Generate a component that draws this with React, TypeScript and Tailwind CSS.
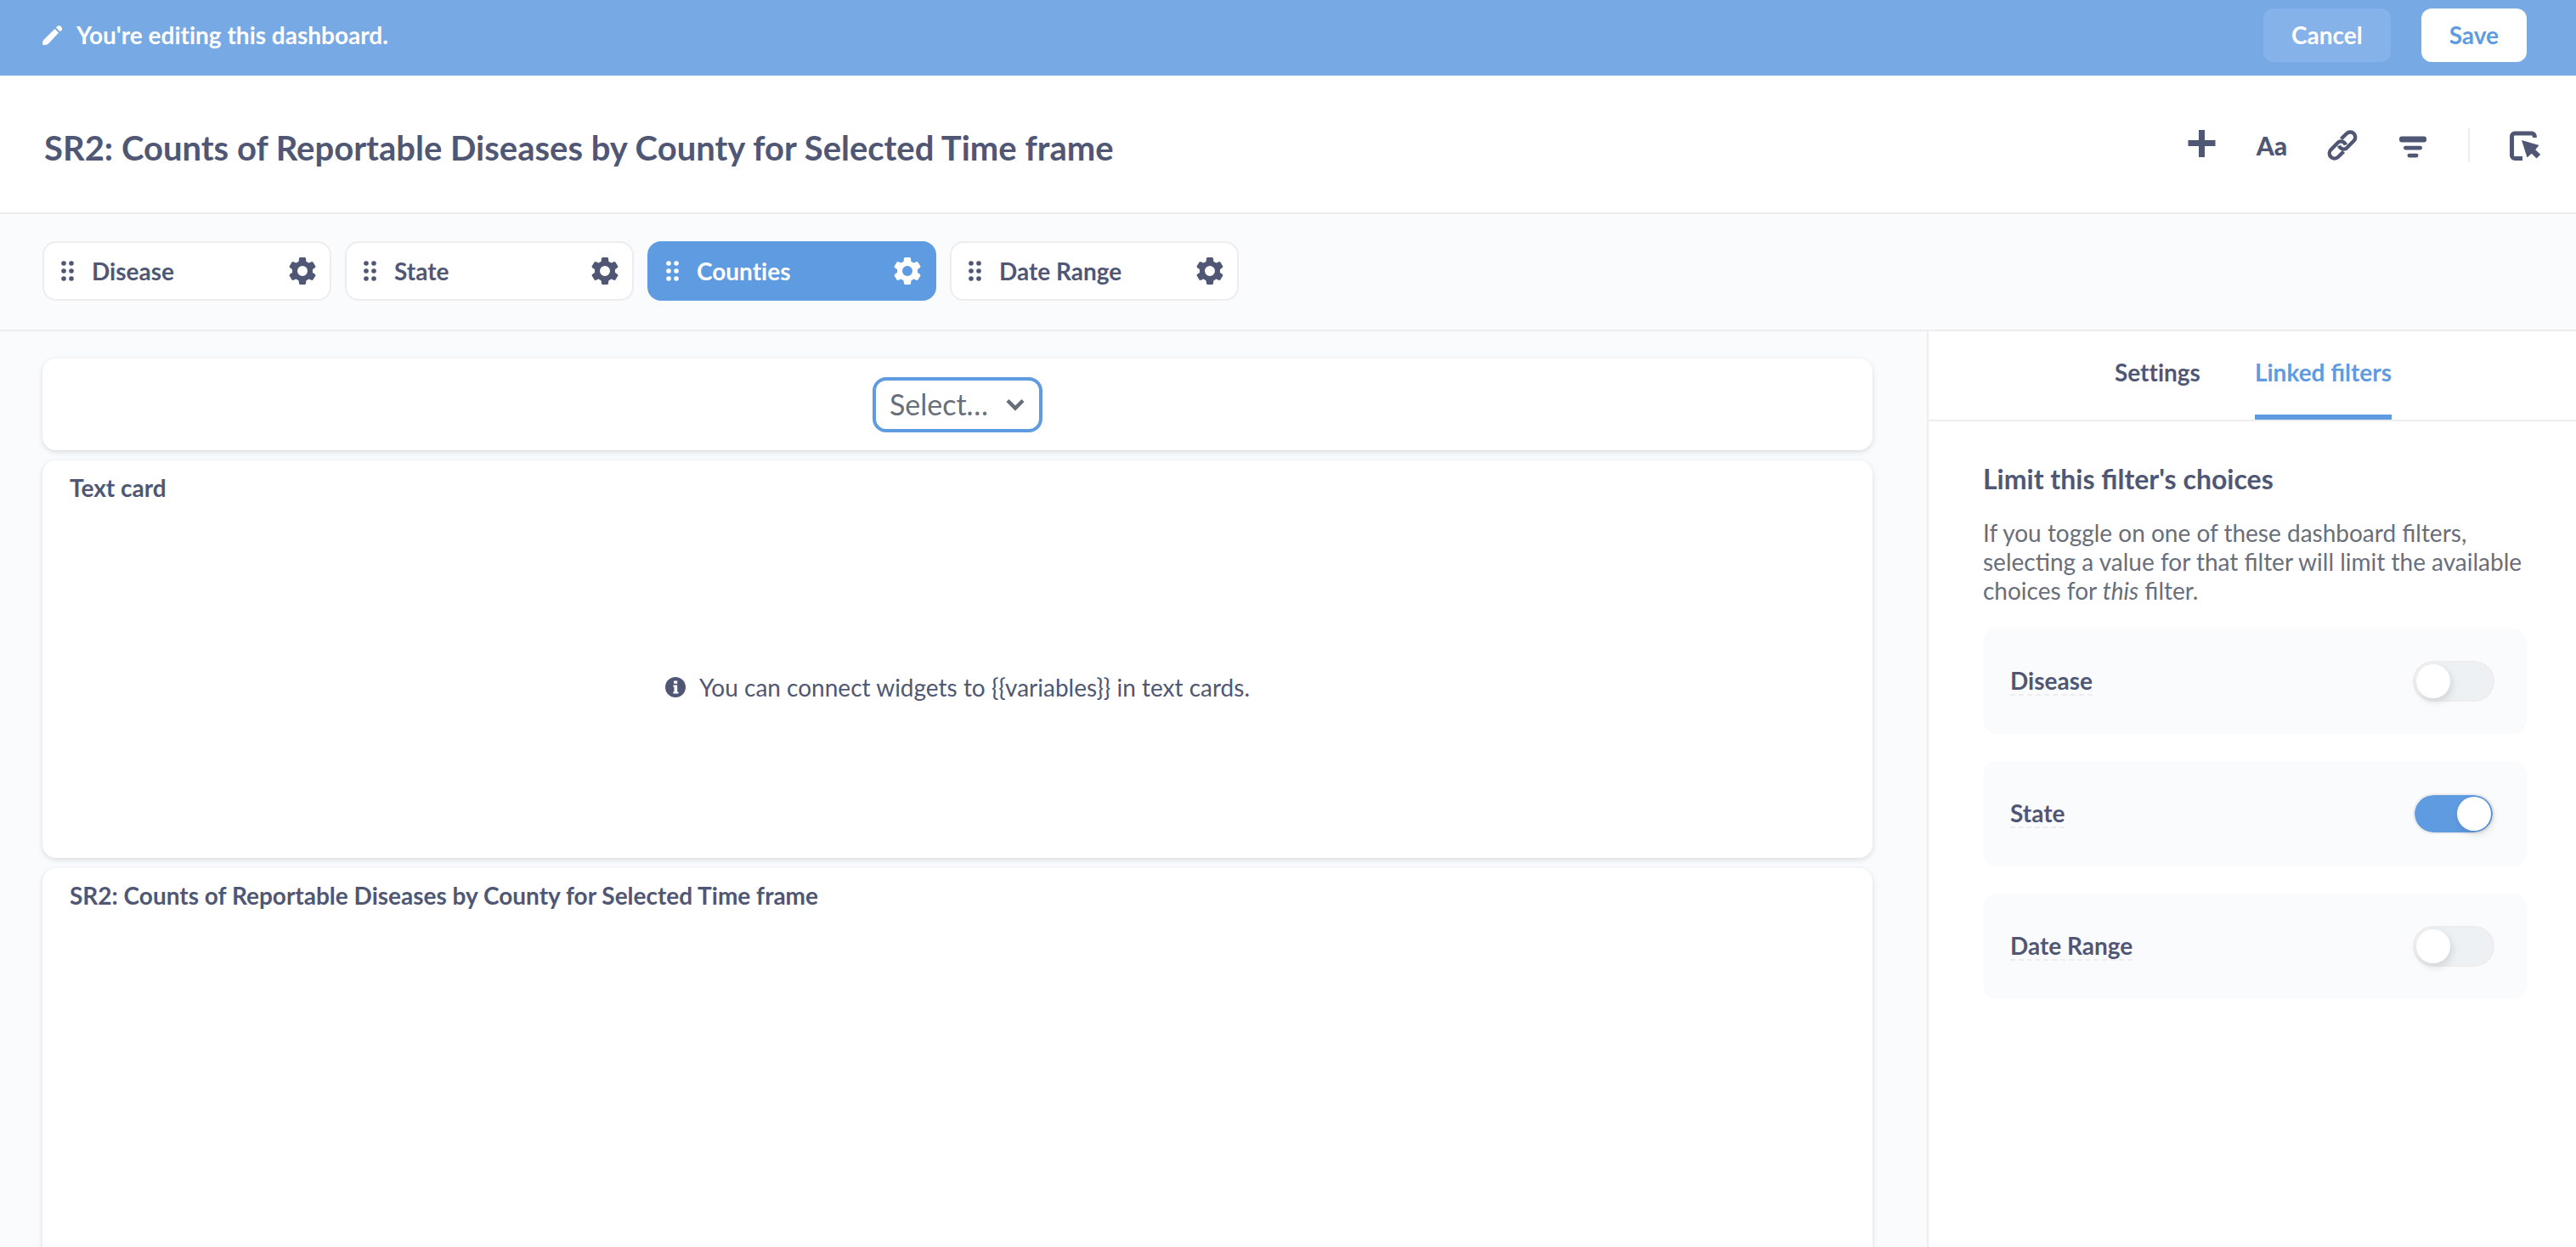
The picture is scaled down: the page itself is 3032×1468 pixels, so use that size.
import { useState, type ReactNode } from "react";

const filters = ["Disease", "State", "Counties", "Date Range"];
const linkable = ["Disease", "State", "Date Range"];

function PencilIcon() {
  return (
    <svg className="size-6" viewBox="0 0 24 24" fill="currentColor" aria-hidden="true">
      <path d="M14.500 5 19 9.500 7.200 22.200C6 23.400 4.500 24 2 24 .8 24 0 23.600 0 22.400c0-2 .6-3.800 1.800-5z" />
      <path d="M16 3.500 18 1.500a4 4 0 0 1 5 5L20.500 8z" />
    </svg>
  );
}

function GripIcon() {
  return (
    <svg className="h-6 w-4" viewBox="0 0 16 24" fill="currentColor" aria-hidden="true">
      {[3, 12].map((x) => [3, 12, 21].map((y) => <circle key={`${x}-${y}`} cx={x} cy={y} r="2.8" />))}
    </svg>
  );
}

function GearIcon() {
  return (
    <svg className="size-8" viewBox="0 0 32 32" fill="currentColor" aria-hidden="true">
      <circle cx="16" cy="16" r="9" fill="none" stroke="currentColor" strokeWidth="6" />
      {[0, 60, 120, 180, 240, 300].map((angle) => (
        <path key={angle} d="M13 0h6l1 1 .6 6h-9.200l.6-6z" transform={`rotate(${angle} 16 16)`} />
      ))}
    </svg>
  );
}

function PlusIcon() {
  return (
    <svg className="size-9" viewBox="0 0 36 36" fill="currentColor" aria-hidden="true">
      <path d="M15 0h7v12h12.500v7H22v13h-7V19H2.500v-7H15z" />
    </svg>
  );
}

function LinkIcon() {
  return (
    <svg className="size-9" viewBox="0 0 36 36" fill="none" stroke="currentColor" strokeWidth="4.4" aria-hidden="true">
      <path d="M16.500 10.500 23 4.300a5.900 5.900 0 0 1 8.500 8.500L22.500 21.800a5.900 5.900 0 0 1-8.500-3.300" />
      <path d="M19.500 25.500 13 31.700a5.900 5.900 0 0 1-8.500-8.500L13.500 14.200a5.900 5.900 0 0 1 8.500 3.300" />
    </svg>
  );
}

function FilterIcon() {
  return (
    <svg className="size-9" viewBox="0 0 36 36" fill="currentColor" aria-hidden="true">
      <rect x="2" y="7.500" width="32" height="7" rx="3" />
      <rect x="7" y="18.800" width="22" height="4.600" rx="2.300" />
      <rect x="11.500" y="27.800" width="13" height="4.600" rx="2.300" />
    </svg>
  );
}

function ClickIcon() {
  return (
    <svg className="size-9" viewBox="0 0 36 36" aria-hidden="true">
      <path
        d="M29.300 9V7.500a3.500 3.500 0 0 0-3.500-3.500H6a3.500 3.500 0 0 0-3.500 3.500v22.500a3.500 3.500 0 0 0 3.500 3.500H15"
        fill="none"
        stroke="currentColor"
        strokeWidth="5"
      />
      <path d="M14 12 34.500 18l-4.300 5.200 6 5.700-4.600 4.600-5.900-5.800-5.200 4.900z" fill="currentColor" />
    </svg>
  );
}

function InfoIcon() {
  return (
    <svg className="size-6" viewBox="0 0 24 24" aria-hidden="true">
      <circle cx="12" cy="12" r="12" fill="currentColor" />
      <path d="M10 4.500h4.200v3.300H10zM9.500 9.500h4.700v8h1.300v2H9.300v-2h1.200v-6h-1z" fill="#fff" />
    </svg>
  );
}

function ChevronIcon() {
  return (
    <svg className="h-4 w-6" viewBox="0 0 24 16" fill="none" stroke="currentColor" strokeWidth="4.500" aria-hidden="true">
      <path d="m3 3.500 9 9 9-9" />
    </svg>
  );
}

function ToolButton({ label, children }: { label: string; children: ReactNode }) {
  return (
    <button type="button" aria-label={label} className="flex h-10 w-9 items-center justify-center">
      {children}
    </button>
  );
}

function FilterPill({ name, active }: { name: string; active: boolean }) {
  return (
    <div
      className={`flex h-[70px] w-[340px] items-center rounded-2xl border-2 pr-4 pl-5 ${
        active ? "border-[#5f9be1] bg-[#5f9be1] text-white" : "border-[#eeecec] bg-white text-[#4f5775]"
      }`}
    >
      <GripIcon />
      <button
        type="button"
        className="ml-5 flex-1 text-left text-[28px] leading-8 font-bold [font-variant-ligatures:none]"
      >
        {name}
      </button>
      <button type="button" aria-label={`${name} settings`}>
        <GearIcon />
      </button>
    </div>
  );
}

function Card({ className, children }: { className: string; children: ReactNode }) {
  return (
    <section className={`rounded-2xl bg-white shadow-[0_2px_6px_rgba(0,0,0,0.13)] ${className}`}>{children}</section>
  );
}

function LinkedToggle({ name, on, onChange }: { name: string; on: boolean; onChange: () => void }) {
  return (
    <label className="flex h-31 items-center justify-between rounded-2xl bg-[#fafbfd] pr-[38px] pl-8">
      <span className="border-b-2 border-dashed border-[#eeecec] text-[28px] leading-8 font-bold">{name}</span>
      <span className="relative flex">
        <input
          type="checkbox"
          role="switch"
          checked={on}
          onChange={onChange}
          className="peer h-12 w-24 appearance-none rounded-full border-2 border-[#eeecec] bg-[#edf1f4] bg-clip-padding checked:bg-[#5f9be1]"
        />
        <span className="pointer-events-none absolute top-1 left-1 size-10 rounded-full bg-white shadow-[2px_4px_10px_rgba(0,0,0,0.12)] peer-checked:translate-x-12" />
      </span>
    </label>
  );
}

export default function App() {
  const [linked, setLinked] = useState<string[]>(["State"]);
  const toggle = (name: string) =>
    setLinked((now) => (now.includes(name) ? now.filter((n) => n !== name) : [...now, name]));

  return (
    <div className="flex h-screen flex-col overflow-hidden bg-white font-['Lato',sans-serif] text-[#4f5775]">
      <div className="flex h-[89px] shrink-0 items-start justify-between bg-[#77a9e5] pt-[10px] pr-[58px] pl-[50px] text-[28px] leading-8 font-bold text-white">
        <div className="flex h-[62px] items-center gap-4">
          <PencilIcon />
          <span className="[font-variant-ligatures:none]">You're editing this dashboard.</span>
        </div>
        <div className="flex gap-9">
          <button type="button" className="h-[63px] rounded-xl bg-white/10 px-[33px] pb-[2px]">
            Cancel
          </button>
          <button type="button" className="h-[63px] rounded-xl bg-white px-[33px] pb-[2px] text-[#5f9be1]">
            Save
          </button>
        </div>
      </div>

      <header className="flex h-[163px] shrink-0 items-center justify-between border-b-2 border-[#eeecec] pr-[42px] pl-[52px]">
        <h1 className="pt-2 text-[40px] leading-12 font-bold">
          SR2: Counts of Reportable Diseases by County for Selected Time frame
        </h1>
        <div className="flex items-center gap-[47px] pt-[2px]">
          <ToolButton label="Add questions">
            <PlusIcon />
          </ToolButton>
          <ToolButton label="Add a text box">
            <span className="text-[30px] leading-9 font-black">Aa</span>
          </ToolButton>
          <ToolButton label="Add link card">
            <LinkIcon />
          </ToolButton>
          <ToolButton label="Add a filter">
            <FilterIcon />
          </ToolButton>
          <div className="h-10 w-[2px] bg-[#eeecec]" />
          <ToolButton label="Click behavior">
            <ClickIcon />
          </ToolButton>
        </div>
      </header>

      <div className="flex h-[138px] shrink-0 items-start gap-4 border-b-2 border-[#eeecec] bg-[#fafbfd] px-[50px] pt-8">
        {filters.map((name) => (
          <FilterPill key={name} name={name} active={name === "Counties"} />
        ))}
      </div>

      <div className="flex min-h-0 flex-1">
        <main className="flex min-w-0 flex-1 flex-col gap-3 overflow-hidden bg-[#fafbfd] pt-8 pr-16 pl-[50px]">
          <Card className="flex h-27 shrink-0 items-center justify-center">
            <button
              type="button"
              className="flex h-[65px] items-center gap-5 rounded-2xl border-4 border-[#5f9be1] px-4 text-[34px] leading-10 text-[#696e7b]"
            >
              Select…
              <ChevronIcon />
            </button>
          </Card>
          <Card className="flex h-[468px] shrink-0 flex-col px-8 pt-[14px]">
            <h2 className="text-[28px] leading-9 font-bold">Text card</h2>
            <div className="flex flex-1 items-center justify-center gap-4 pt-4 text-[28px] leading-9">
              <InfoIcon />
              <p>You can connect widgets to {"{{variables}}"} in text cards.</p>
            </div>
          </Card>
          <Card className="h-[600px] shrink-0 px-8 pt-[14px]">
            <h2 className="text-[28px] leading-9 font-bold">
              SR2: Counts of Reportable Diseases by County for Selected Time frame
            </h2>
          </Card>
        </main>

        <aside className="w-[764px] shrink-0 border-l-2 border-[#eeecec] bg-white">
          <div
            role="tablist"
            className="flex h-[106px] justify-center gap-16 border-b-2 border-[#eeecec] pl-[2px] text-[28px] leading-8 font-bold"
          >
            <button
              type="button"
              role="tab"
              aria-selected="false"
              className="border-b-6 border-transparent pb-[2px] [font-variant-ligatures:none]"
            >
              Settings
            </button>
            <button
              type="button"
              role="tab"
              aria-selected="true"
              className="border-b-6 border-[#5f9be1] pb-[2px] text-[#5f9be1]"
            >
              Linked filters
            </button>
          </div>
          <div className="pt-12 pr-[58px] pl-16">
            <h2 className="text-[32px] leading-10 font-bold">Limit this filter's choices</h2>
            <p className="-mr-8 mt-[26px] text-[28px] leading-[34px] text-[#696e7b]">
              If you toggle on one of these dashboard filters,
              <br />
              selecting a value for that filter will limit the available choices for <em>this</em> filter.
            </p>
            <div className="mt-7 flex flex-col gap-8">
              {linkable.map((name) => (
                <LinkedToggle key={name} name={name} on={linked.includes(name)} onChange={() => toggle(name)} />
              ))}
            </div>
          </div>
        </aside>
      </div>
    </div>
  );
}
